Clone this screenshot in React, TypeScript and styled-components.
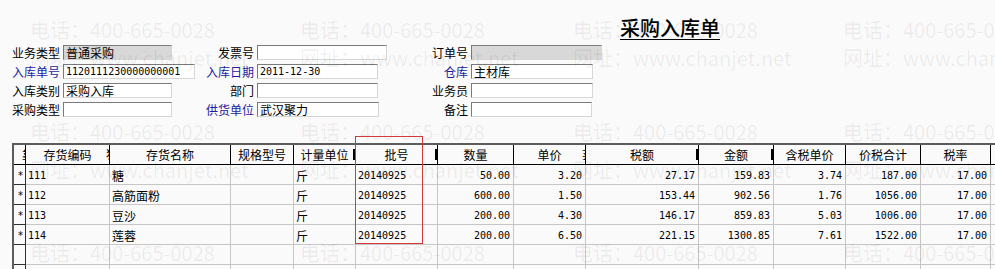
import React from 'react';
import styled, { createGlobalStyle } from 'styled-components';

const CJK = `"Noto Sans CJK SC", "Noto Sans", sans-serif`;
const MONO = `"DejaVu Sans Mono", "Liberation Mono", monospace`;

const GlobalStyle = createGlobalStyle`
  html, body {
    margin: 0;
    padding: 0;
    background: #fafafa;
  }

  body {
    font-family: ${CJK};
    font-size: 12px;
    color: #000;
  }
`;

const Page = styled.div`
  position: relative;
  width: 995px;
  height: 269px;
  overflow: hidden;
  background: #fafafa;
`;

const TitleRow = styled.div`
  height: 45px;
  box-sizing: border-box;
  padding: 17px 0 0 620px;
`;

const Title = styled.h1`
  display: inline-block;
  margin: 0;
  font-family: ${CJK};
  font-size: 20px;
  font-weight: 500;
  line-height: 22px;
  border-bottom: 1px solid #000;
`;

const Form = styled.div`
  display: flex;
  padding-left: 10px;
`;

const FormColumn = styled.div<{ $width?: number }>`
  display: flex;
  flex-direction: column;
  gap: 4px;
  flex: none;
  width: ${(p) => (p.$width ? `${p.$width}px` : 'auto')};
`;

const Field = styled.div`
  display: flex;
  align-items: center;
  gap: 3px;
  height: 15px;
`;

const Label = styled.span<{ $blue?: boolean }>`
  width: 50px;
  text-align: right;
  white-space: nowrap;
  font-size: 12px;
  line-height: 15px;
  color: ${(p) => (p.$blue ? '#1c1ca0' : '#000')};
`;

const Input = styled.div<{ $width: number; $disabled?: boolean; $mono?: boolean }>`
  box-sizing: border-box;
  width: ${(p) => p.$width}px;
  height: 15px;
  padding-left: 2px;
  background: ${(p) => (p.$disabled ? '#d8d8d8' : '#fff')};
  border-top: 1px solid #7a7a7a;
  border-left: 1px solid #7a7a7a;
  border-right: 1px solid #d6d6d6;
  border-bottom: 1px solid #d6d6d6;
  overflow: hidden;
  white-space: nowrap;
  font-family: ${(p) => (p.$mono ? MONO : CJK)};
  font-size: ${(p) => (p.$mono ? '10px' : '12px')};
  line-height: 13px;
`;

const COLS = [12, 84, 121, 63, 62, 82, 76, 72, 113, 75, 72, 75, 70, 60];

const Table = styled.div`
  width: max-content;
  margin: 26px 0 0 12px;
  border-top: 2px solid #5c5c5c;
  border-left: 2px solid #5c5c5c;
`;

const Row = styled.div`
  display: grid;
  grid-template-columns: ${COLS.map((c) => `${c}px`).join(' ')};
`;

const HeadCell = styled.div`
  position: relative;
  box-sizing: border-box;
  height: 20px;
  border-right: 1px solid #000;
  border-bottom: 1px solid #000;
  text-align: center;
  line-height: 19px;
  font-size: 12px;
  white-space: nowrap;
  overflow: hidden;
`;

const Tail = styled.span<{ $glyph?: boolean }>`
  position: absolute;
  right: 0;
  top: 4px;
  width: ${(p) => (p.$glyph ? '3px' : '2px')};
  height: 11px;
  background: ${(p) => (p.$glyph ? 'transparent' : '#000')};
  overflow: hidden;
  line-height: 11px;
  font-size: 12px;
  text-indent: 0;
  text-align: left;
`;

const Cell = styled.div<{ $align?: 'left' | 'right' | 'center'; $mono?: boolean; $marker?: boolean }>`
  box-sizing: border-box;
  height: 20px;
  padding: ${(p) => (p.$align === 'right' ? '0 3px 0 0' : '0 0 0 2px')};
  border-right: 1px solid ${(p) => (p.$marker ? '#303030' : '#c6c6c6')};
  border-bottom: 1px solid ${(p) => (p.$marker ? '#303030' : '#c6c6c6')};
  text-align: ${(p) => p.$align || 'left'};
  font-family: ${(p) => (p.$mono ? MONO : CJK)};
  font-size: ${(p) => (p.$mono ? '10px' : '12px')};
  line-height: 21px;
  white-space: nowrap;
  overflow: hidden;
`;

const Watermark = styled.div`
  position: absolute;
  inset: 0;
  padding: 18px 0 0 30px;
  display: grid;
  grid-template-columns: 270px 273px 270px 270px;
  grid-template-rows: 28px 74px 38px 83px 24px;
  pointer-events: none;
  color: rgba(0, 0, 0, 0.065);
  font-family: ${CJK};
  font-size: 20px;
  line-height: 24px;
  white-space: nowrap;
`;

const Mark = styled.span`
  overflow: visible;
`;

const Highlight = styled.div`
  position: absolute;
  left: 355px;
  top: 136px;
  width: 68px;
  height: 108px;
  box-sizing: border-box;
  border: 1px solid #d43a3a;
  pointer-events: none;
`;

type FieldDef = { label: string; blue?: boolean; width: number; value?: string; disabled?: boolean; mono?: boolean };

const leftFields: FieldDef[] = [
  { label: '业务类型', width: 109, value: '普通采购', disabled: true },
  { label: '入库单号', blue: true, width: 132, value: '1120111230000000001', mono: true },
  { label: '入库类别', width: 109, value: '采购入库' },
  { label: '采购类型', width: 109 },
];

const midFields: FieldDef[] = [
  { label: '发票号', width: 130 },
  { label: '入库日期', blue: true, width: 121, value: '2011-12-30', mono: true },
  { label: '部门', width: 121 },
  { label: '供货单位', blue: true, width: 122, value: '武汉聚力' },
];

const rightFields: FieldDef[] = [
  { label: '订单号', width: 131, disabled: true },
  { label: '仓库', blue: true, width: 122, value: '主材库' },
  { label: '业务员', width: 122 },
  { label: '备注', width: 121 },
];

const headers: { title: string; tail?: string; bar?: boolean }[] = [
  { title: '', tail: '靠' },
  { title: '存货编码', tail: '猿' },
  { title: '存货名称' },
  { title: '规格型号' },
  { title: '计量单位', bar: true },
  { title: '批号', bar: true },
  { title: '数量' },
  { title: '单价', tail: '莱' },
  { title: '税额', bar: true },
  { title: '金额', bar: true },
  { title: '含税单价' },
  { title: '价税合计' },
  { title: '税率' },
  { title: '', tail: '乾' },
];

const rows = [
  ['111', '糖', '斤', '20140925', '50.00', '3.20', '27.17', '159.83', '3.74', '187.00', '17.00'],
  ['112', '高筋面粉', '斤', '20140925', '600.00', '1.50', '153.44', '902.56', '1.76', '1056.00', '17.00'],
  ['113', '豆沙', '斤', '20140925', '200.00', '4.30', '146.17', '859.83', '5.03', '1006.00', '17.00'],
  ['114', '莲蓉', '斤', '20140925', '200.00', '6.50', '221.15', '1300.85', '7.61', '1522.00', '17.00'],
];

const marks = ['电话：400-665-0028', '网址：www.chanjet.net', '电话：400-665-0028', '网址：www.chanjet.net', '电话：400-665-0028'];

const FieldColumn = ({ fields, width }: { fields: FieldDef[]; width?: number }) => (
  <FormColumn $width={width}>
    {fields.map((f) => (
      <Field key={f.label}>
        <Label $blue={f.blue}>{f.label}</Label>
        <Input $width={f.width} $disabled={f.disabled} $mono={f.mono}>
          {f.value}
        </Input>
      </Field>
    ))}
  </FormColumn>
);

const DataRow = ({ data }: { data?: string[] }) => {
  const d = data || [];
  return (
    <Row>
      <Cell $marker $align="center" $mono>
        {data ? '*' : ''}
      </Cell>
      <Cell $mono>{d[0]}</Cell>
      <Cell>{d[1]}</Cell>
      <Cell />
      <Cell>{d[2]}</Cell>
      <Cell $mono>{d[3]}</Cell>
      {[4, 5, 6, 7, 8, 9, 10].map((i) => (
        <Cell key={i} $align="right" $mono>
          {d[i]}
        </Cell>
      ))}
      <Cell />
    </Row>
  );
};

export default function App() {
  return (
    <Page>
      <GlobalStyle />
      <TitleRow>
        <Title>采购入库单</Title>
      </TitleRow>
      <Form>
        <FieldColumn fields={leftFields} width={194} />
        <FieldColumn fields={midFields} width={214} />
        <FieldColumn fields={rightFields} />
      </Form>
      <Table>
        <Row>
          {headers.map((h, i) => (
            <HeadCell key={i}>
              {h.title}
              {h.bar && <Tail />}
              {h.tail && <Tail $glyph>{h.tail}</Tail>}
            </HeadCell>
          ))}
        </Row>
        {rows.map((r) => (
          <DataRow key={r[0]} data={r} />
        ))}
        <DataRow />
        <DataRow />
      </Table>
      <Watermark>
        {marks.map((m, r) =>
          [0, 1, 2, 3].map((c) => <Mark key={`${r}-${c}`}>{m}</Mark>)
        )}
      </Watermark>
      <Highlight />
    </Page>
  );
}
